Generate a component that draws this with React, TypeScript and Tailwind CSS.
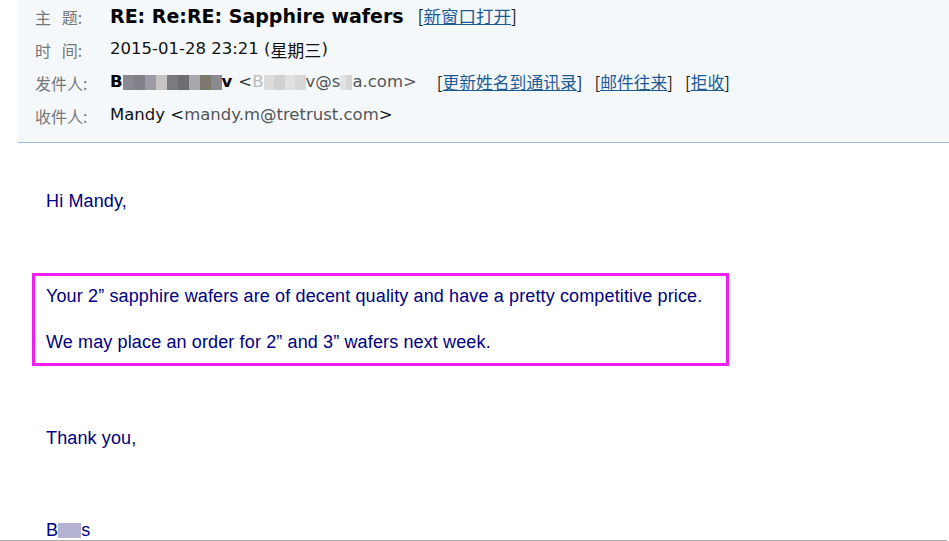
const CN = '"Noto Sans CJK SC", "Noto Sans", sans-serif';

function Blur({ colors, w }: { colors: string[]; w: number }) {
  // pixelated name redaction
  return (
    <span className="inline-flex h-[15px]">
      {colors.map((c, i) => (
        <span key={i} style={{ background: c, width: w }} className="h-full" />
      ))}
    </span>
  );
}

function Link({ children }: { children: React.ReactNode }) {
  return (
    <span className="text-[#222]">
      [<a href="#" className="text-[#1d5b94] underline">{children}</a>]
    </span>
  );
}

function Row({ label, children }: { label: React.ReactNode; children: React.ReactNode }) {
  return (
    <div className="flex h-[33px] items-center">
      <div className="w-[75px] shrink-0 text-[16px] text-[#777]" style={{ fontFamily: CN }}>
        {label}
      </div>
      <div className="flex items-center text-[16.5px] text-[#111] whitespace-nowrap" style={{ fontFamily: '"DejaVu Sans", ' + CN }}>
        {children}
      </div>
    </div>
  );
}

export default function App() {
  return (
    <div className="relative h-[541px] w-[949px] overflow-hidden bg-white">
      <div className="ml-[18px] h-[143px] border-b border-[#9dbfd9] bg-[#f4f8fb] pl-[17px]">
        <Row label={<span>主&nbsp;&nbsp;&nbsp;题:</span>}>
          <span className="text-[19px] font-bold text-black">RE: Re:RE: Sapphire wafers</span>
          <span className="ml-[14px] text-[17.5px]" style={{ fontFamily: CN }}>
            <Link>新窗口打开</Link>
          </span>
        </Row>
        <Row label={<span>时&nbsp;&nbsp;&nbsp;间:</span>}>
          <span>2015-01-28 23:21 (</span>
          <span className="text-[17px]" style={{ fontFamily: CN }}>星期三</span>
          <span>)</span>
        </Row>
        <Row label="发件人:">
          <span className="font-bold text-black">B</span>
          <Blur w={11} colors={["#8a8a94", "#82808a", "#9c9aa2", "#c8c4c4", "#7a7a80", "#6e6e72", "#a8a8aa", "#7c786c", "#8a8a90"]} />
          <span className="font-bold text-black">v</span>
          <span className="ml-[6px] text-[#333]">&lt;</span>
          <span className="text-[#bbb]">B</span>
          <Blur w={10.5} colors={["#dcdcdc", "#d0d0d0", "#e0e0e0", "#d8d8d8"]} />
          <span className="text-[#555]">v@s</span>
          <Blur w={6} colors={["#e2e2e2", "#d6d6d6"]} />
          <span className="text-[#555]">a.com&gt;</span>
          <span className="ml-[20px] flex gap-[12px] text-[16.8px]" style={{ fontFamily: CN }}>
            <Link>更新姓名到通讯录</Link>
            <Link>邮件往来</Link>
            <Link>拒收</Link>
          </span>
        </Row>
        <Row label="收件人:">
          <span>Mandy &lt;</span>
          <span className="text-[#555]">mandy.m@tretrust.com</span>
          <span>&gt;</span>
        </Row>
      </div>

      <div className="text-[18px] tracking-[0.13px] text-[#000080]" style={{ fontFamily: '"Liberation Sans", Arial, sans-serif' }}>
        <p className="ml-[46px] mt-[48px] leading-[20px]">Hi Mandy,</p>
        <div className="ml-[32px] mt-[62px] w-[697px] border-[3px] border-[#f01ef0] pl-[11px] pt-[10px] pb-[11px]">
          <p className="leading-[20px]">Your 2” sapphire wafers are of decent quality and have a pretty competitive price.</p>
          <p className="mt-[26px] leading-[20px]">We may place an order for 2” and 3” wafers next week.</p>
        </div>
        <p className="ml-[46px] mt-[62px] leading-[20px]">Thank you,</p>
        <p className="ml-[46px] mt-[72px] flex items-center leading-[20px]">
          B<span className="h-[15px] w-[23px] bg-[#b4b4d2]" />s
        </p>
      </div>
      <div className="absolute bottom-0 left-0 h-px w-[947px] bg-[#b0b0b0]" />
    </div>
  );
}
